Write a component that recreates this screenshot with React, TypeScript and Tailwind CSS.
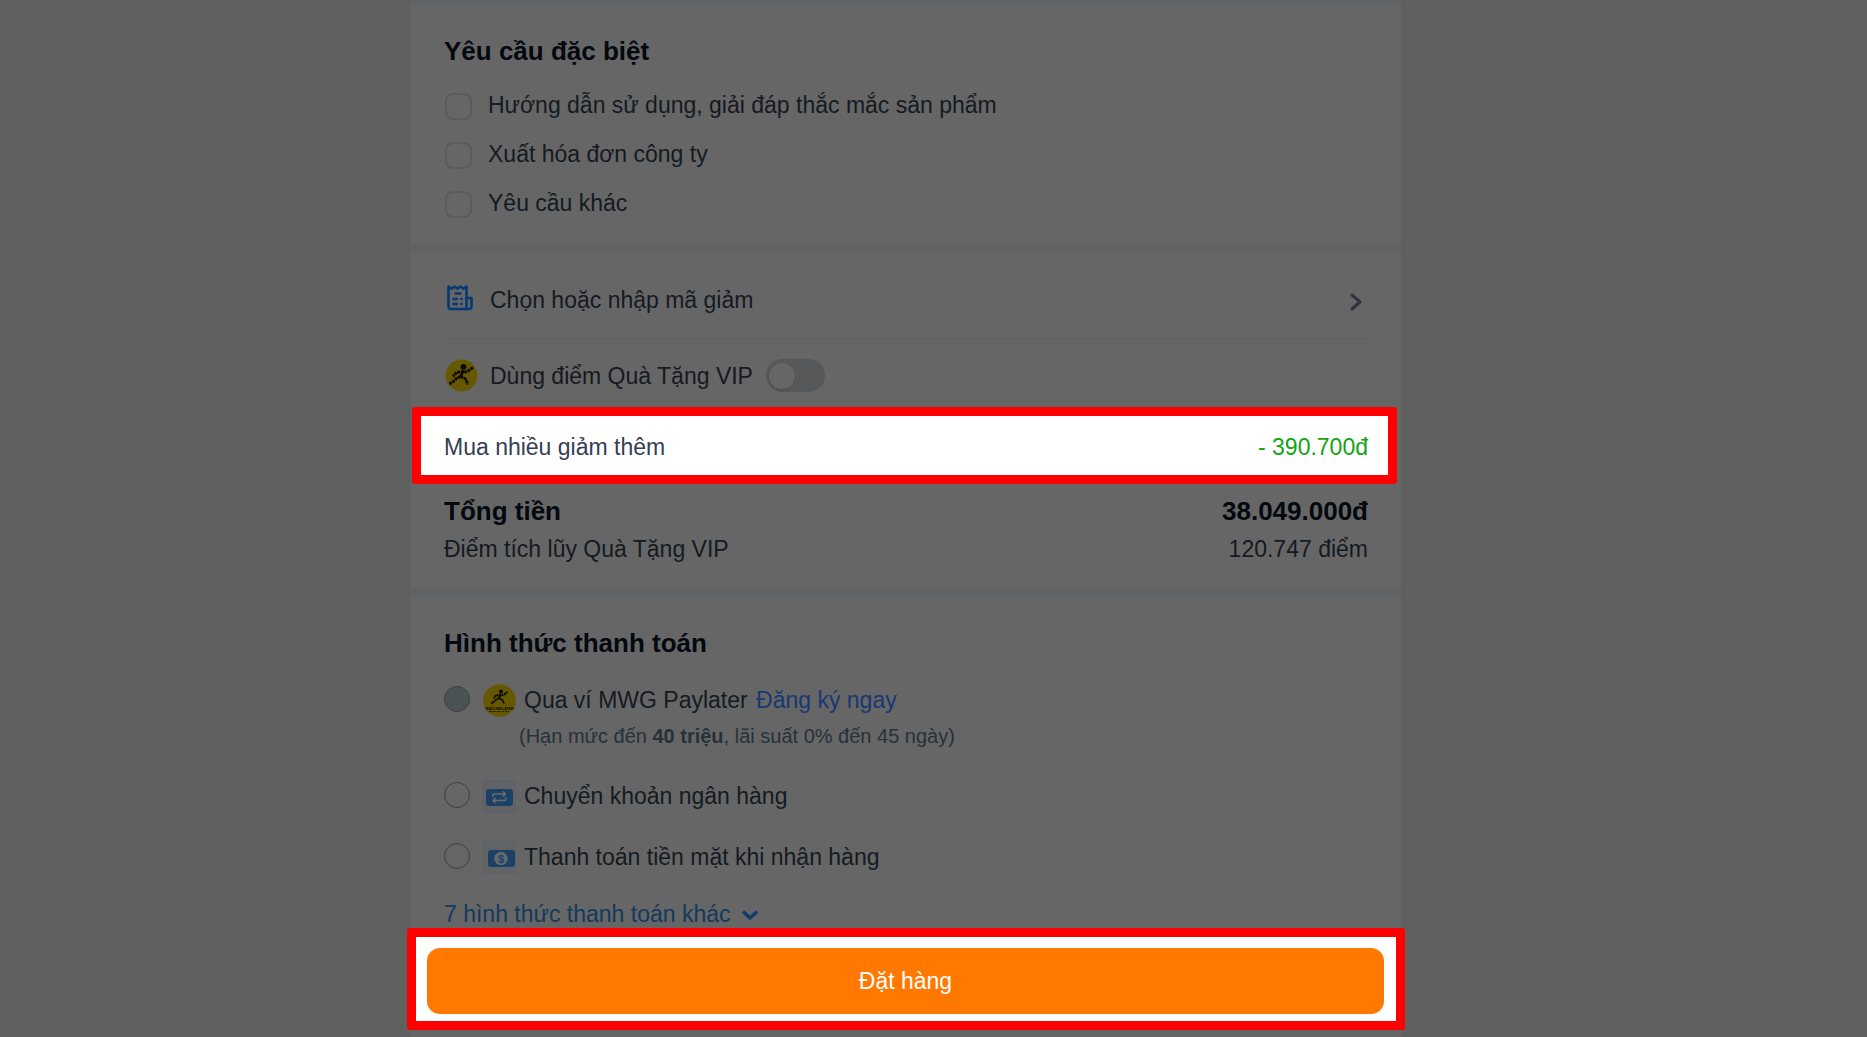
import React from "react";

const requests = [
  "Hướng dẫn sử dụng, giải đáp thắc mắc sản phẩm",
  "Xuất hóa đơn công ty",
  "Yêu cầu khác",
];

function CouponIcon() {
  return (
    <svg viewBox="0 0 26 26" className="size-[26px]" fill="none" stroke="#053a75" strokeWidth="2.6" strokeLinecap="round" strokeLinejoin="round" aria-hidden="true">
      <path d="M1.500 1.500v20a2.500 2.500 0 0 0 2.500 2.500h18a2.500 2.500 0 0 0 2.500-2.500v-8.500h-5V1.500l-3 2.200-3-2.200-3 2.200-3-2.200-2.800 2.200z" />
      <path d="M19.500 13v11M8.500 8.500h5M6.500 14h3.500M14.300 14h.3M6.500 19h3.500M14.300 19h.3" />
    </svg>
  );
}

function Runner({ transform }: { transform?: string }) {
  return (
    <g transform={transform}>
      <circle cx="18.500" cy="7.800" r="2.900" fill="#0a0900" />
      <g fill="none" stroke="#0a0900" strokeWidth="2.800" strokeDasharray="2.900 0.700">
        <path d="M28 8.500l-5 3.500-4 1.500-7-.5-4 4.500" />
        <path d="M18 11l-2 6.500-3.500 1-3.500 3.500-4.500 3" />
        <path d="M15.500 17.500l5 2.500 2.500 5.500" />
      </g>
    </g>
  );
}

function VipIcon() {
  return (
    <svg viewBox="0 0 33 33" className="size-[33px]" aria-hidden="true">
      <circle cx="16.500" cy="16.500" r="16" fill="#665800" />
      <Runner />
    </svg>
  );
}

function PaylaterIcon() {
  return (
    <svg viewBox="0 0 33 33" className="size-[33px]" aria-hidden="true">
      <circle cx="16.500" cy="16.500" r="16.300" fill="#665800" />
      <Runner transform="translate(5 2) scale(0.700)" />
      <text x="16.500" y="25.500" fontSize="3.500" fontWeight="700" textAnchor="middle" fill="#0a0900">MWG PAYLATER</text>
      <path d="M6 27.500h20" stroke="#2b2500" strokeWidth="1" strokeDasharray="2 0.600" />
    </svg>
  );
}

function TransferIcon() {
  return (
    <svg viewBox="0 0 33 33" className="size-[33px]" aria-hidden="true">
      <rect x=".5" y=".5" width="32" height="32" rx="1.500" fill="#616367" stroke="#5d6065" />
      <rect x="3" y="9" width="27" height="17" rx="3" fill="#1c4166" />
      <g fill="none" stroke="#666b70" strokeWidth="1.600" strokeLinejoin="round">
        <path d="M9.800 17v-1.500a1.500 1.500 0 0 1 1.500-1.500H22M20 11.700l2.600 2.300-2.600 2.300" />
        <path d="M22.800 17.500v1.500a1.500 1.500 0 0 1-1.500 1.500H10.500M12.500 18.200l-2.600 2.300 2.600 2.300" />
      </g>
    </svg>
  );
}

function CashIcon() {
  return (
    <svg viewBox="0 0 33 33" className="size-[33px]" aria-hidden="true">
      <rect x="1" y=".5" width="31.500" height="32" rx="1.500" fill="#616367" stroke="#5d6065" />
      <rect x="5" y="9" width="27" height="17" rx="3" fill="#1c4166" />
      <circle cx="18" cy="17.500" r="6.700" fill="#66696d" />
      <text x="18" y="21.500" fontSize="11" fontWeight="700" textAnchor="middle" fill="#1c4166">$</text>
    </svg>
  );
}

function PaymentOption({ id, icon, children, disabled }: { id: string; icon: React.ReactNode; children: React.ReactNode; disabled?: boolean }) {
  return (
    <div className="flex items-start">
      <input
        id={id}
        type="radio"
        name="payment"
        disabled={disabled}
        className="mt-0.5 size-[26px] shrink-0 appearance-none rounded-full border border-[#3d3f45] disabled:bg-[#4c5357]"
      />
      <label htmlFor={id} className="ml-[13px] flex items-start gap-2">
        {icon}
        <span className="mt-px">{children}</span>
      </label>
    </div>
  );
}

export default function App() {
  return (
    <div className="min-h-screen bg-[#606060] pr-[55px] font-['Liberation_Sans',Arial,sans-serif] text-[23px] leading-[30px] text-[#151a22]">
      <main className="mx-auto max-w-[990px] bg-[#606264] pt-[5px]">
        <section className="bg-[#666666] px-[33px] pt-[31px] pb-[26px]">
          <h2 className="text-[26px] font-bold text-[#04080f]">Yêu cầu đặc biệt</h2>
          <div className="mt-6 ml-px flex flex-col gap-[19px]">
            {requests.map((text, i) => (
              <div key={text} className="flex items-end gap-4">
                <input id={`request-${i}`} type="checkbox" className="size-[27px] shrink-0 appearance-none rounded-lg border-2 border-[#5a5b5f]" />
                <label htmlFor={`request-${i}`}>{text}</label>
              </div>
            ))}
          </div>
        </section>

        <section className="mt-[9px] bg-[#666666] pt-8 pb-6">
          <div className="mx-[33px] border-b border-[#5e5f61] pb-[23px]">
            <button type="button" className="flex w-full items-center text-left">
              <span className="-mt-1 ml-[3px]"><CouponIcon /></span>
              <span className="ml-[17px] flex-1">Chọn hoặc nhập mã giảm</span>
              <svg viewBox="0 0 12 18" className="mt-1 mr-[6px] h-[18px] w-3" fill="none" stroke="#30353b" strokeWidth="3" strokeLinecap="round" strokeLinejoin="round" aria-hidden="true">
                <path d="M2 2l8 7-8 7" />
              </svg>
            </button>
          </div>
          <div className="mr-[33px] ml-[34px] mt-5 flex items-center">
            <VipIcon />
            <label htmlFor="vip" className="ml-3">Dùng điểm Quà Tặng VIP</label>
            <span className="relative ml-[13px] h-[33px] w-[59px]">
              <input id="vip" type="checkbox" role="switch" className="block h-full w-full appearance-none rounded-full bg-[#57585a]" />
              <span className="pointer-events-none absolute top-1 left-[3px] size-[26px] rounded-full bg-[#666666] shadow-sm" />
            </span>
          </div>

          <div className="mt-[15px] mr-1 ml-px flex justify-between rounded-[3px] border-[9px] border-[#ff0000] bg-white pt-4 pr-5 pb-[13px] pl-[23px] text-[#344054]">
            <span>Mua nhiều giảm thêm</span>
            <span className="text-[#12a512]">- 390.700đ</span>
          </div>

          <div className="mx-[33px] mt-3 flex justify-between text-[26px] font-bold text-[#04080f]">
            <span>Tổng tiền</span>
            <span>38.049.000đ</span>
          </div>
          <div className="mx-[33px] mt-2 flex justify-between">
            <span>Điểm tích lũy Quà Tặng VIP</span>
            <span>120.747 điểm</span>
          </div>
        </section>

        <section className="mt-[9px] bg-[#666666] px-[33px] pt-[31px]">
          <h2 className="text-[26px] font-bold text-[#04080f]">Hình thức thanh toán</h2>
          <div className="mt-[26px]">
            <PaymentOption id="paylater" icon={<PaylaterIcon />} disabled>
              Qua ví MWG Paylater <a href="#dang-ky" className="ml-0.5 text-[#183872]">Đăng ký ngay</a>
            </PaymentOption>
            <p className="mt-[7px] ml-[75px] text-[20px] leading-6 text-[#2a3038]">
              (Hạn mức đến <b>40 triệu</b>, lãi suất 0% đến 45 ngày)
            </p>
          </div>
          <div className="mt-8 flex flex-col gap-7">
            <PaymentOption id="transfer" icon={<TransferIcon />}>Chuyển khoản ngân hàng</PaymentOption>
            <PaymentOption id="cash" icon={<CashIcon />}>Thanh toán tiền mặt khi nhận hàng</PaymentOption>
          </div>
          <button type="button" className="mt-[27px] flex items-center gap-[11px] leading-[27px] text-[#133a5c]">
            7 hình thức thanh toán khác
            <svg viewBox="0 0 16 10" className="h-[10px] w-4" fill="none" stroke="#123a6b" strokeWidth="3.500" aria-hidden="true">
              <path d="M1 1.500L8 8l7-6.500" />
            </svg>
          </button>
        </section>

        <div className="bg-[#666666] pb-[7px]">
          <div className="-mx-1 rounded-[3px] border-[9px] border-[#ff0000] bg-white pt-[11px] pr-3 pb-[7px] pl-[11px]">
            <button type="button" className="h-[66px] w-full rounded-[13px] bg-[#ff7800] text-white">Đặt hàng</button>
          </div>
        </div>
      </main>
    </div>
  );
}
